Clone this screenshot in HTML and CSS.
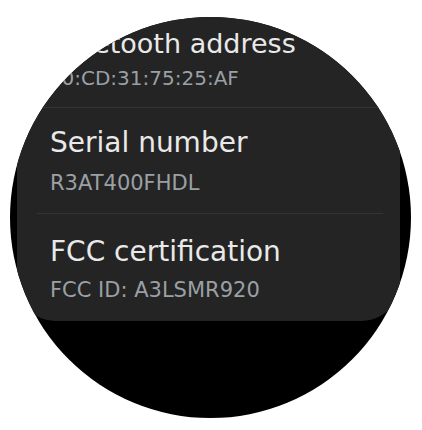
FILE: index.html
```html
<!DOCTYPE html>
<html>
<head>
<meta charset="utf-8">
<link rel="stylesheet" href="styles.css">
</head>
<body>
<div class="watch">
  <div class="card">
    <div class="item item--top">
      <div class="title">Bluetooth address</div>
      <div class="sub">F0:CD:31:75:25:AF</div>
    </div>
    <div class="divider"></div>
    <div class="item">
      <div class="title">Serial number</div>
      <div class="sub">R3AT400FHDL</div>
    </div>
    <div class="divider"></div>
    <div class="item item--last">
      <div class="title">FCC certification</div>
      <div class="sub">FCC ID: A3LSMR920</div>
    </div>
  </div>
</div>
</body>
</html>
```

FILE: styles.css
```css
html, body {
  margin: 0;
  padding: 0;
  background: #ffffff;
}
body {
  width: 422px;
  height: 430px;
  overflow: hidden;
  padding-top: 17px;
  box-sizing: border-box;
  font-family: "DejaVu Sans", Roboto, sans-serif;
}
.watch {
  width: 401px;
  height: 401px;
  margin-left: 10px;
  border-radius: 50%;
  background: #000000;
  overflow: hidden;
}
.card {
  margin-left: 7px;
  width: 383px;
  background: #242424;
  border-radius: 0 0 38px 38px;
  display: flex;
  flex-direction: column;
}
.item {
  display: flex;
  flex-direction: column;
  padding: 18px 20px 17px 33px;
  gap: 10px;
}
.item--top {
  padding-top: 10px;
  padding-bottom: 16px;
  gap: 4px;
}
.item--last {
  padding-top: 21px;
  padding-bottom: 18px;
  gap: 8px;
}
.title {
  font-size: 28px;
  line-height: 34px;
  color: #e9e9e9;
  white-space: nowrap;
}
.sub {
  font-size: 21px;
  line-height: 26px;
  color: #9aa0a6;
  white-space: nowrap;
}
.item--top .title {
  font-size: 27px;
}
.item--top .sub {
  font-size: 20px;
}
.divider {
  height: 1px;
  margin: 0 17px 0 20px;
  background: #343434;
}
```
